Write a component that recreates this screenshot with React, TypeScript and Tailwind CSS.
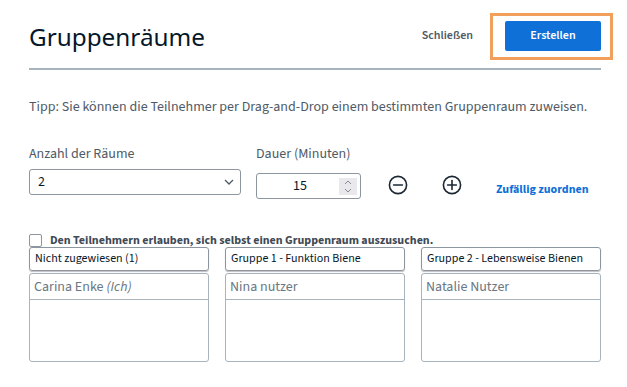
import React from "react";

function CircleIcon({ plus }: { plus?: boolean }) {
  return (
    <svg width="20" height="20" viewBox="0 0 20 20" fill="none" stroke="#1c2733" strokeWidth="1.6">
      <circle cx="10" cy="10" r="8.6" />
      <line x1="5.6" y1="10" x2="14.4" y2="10" strokeLinecap="round" />
      {plus && <line x1="10" y1="5.6" x2="10" y2="14.4" strokeLinecap="round" />}
    </svg>
  );
}

function Column({ title, name, me }: { title: string; name: string; me?: boolean }) {
  return (
    <div className="flex flex-col">
      <div className="h-[24px] flex items-center px-[5px] border border-[#8b96a1] rounded-[3px] shadow-[0_1px_1px_rgba(0,0,0,0.25)] text-[12px] text-[#06172a] leading-none">
        {title}
      </div>
      <div className="mt-[2px] h-[89px] border border-[#a7b3bd] rounded-[3px]">
        <div className="h-[26px] flex items-center px-[4px] border-b border-[#a7b3bd] text-[14px] text-[#6b7783] leading-none">
          {name}
          {me && <i className="ml-[3px]">(Ich)</i>}
        </div>
      </div>
    </div>
  );
}

export default function App() {
  return (
    <div className="w-[627px] h-[387px] bg-white overflow-hidden font-['Source_Sans_3','Lato','Liberation_Sans',sans-serif]">
      <div className="pl-[29px] pr-[26px] pt-[21px]">
        <div className="flex items-center justify-between h-[30px]">
          <h1 className="text-[24.3px] leading-none text-[#06172a] mt-[2px] font-['Noto_Sans','Source_Sans_3',sans-serif]">
            Gruppenräume
          </h1>
          <div className="flex items-center">
            <span className="text-[12px] font-semibold text-[#4e5a66] mr-[32px]">Schließen</span>
            <div className="relative">
              <div className="absolute left-[-15px] right-[-12px] top-[-8px] bottom-[-9px] border-[3px] border-[#f0a05a]" />
              <button className="relative w-[96px] h-[30px] rounded-[2px] bg-[#0f70d7] text-white text-[12px] font-semibold">
                Erstellen
              </button>
            </div>
          </div>
        </div>

        <div className="mt-[17px] h-[2px] bg-[#a7b3bd]" />

        <p className="mt-[27px] text-[14px] leading-[20px] text-[#4e5a66]">
          Tipp: Sie können die Teilnehmer per Drag-and-Drop einem bestimmten Gruppenraum zuweisen.
        </p>

        <div className="mt-[27px] flex items-start">
          <div className="w-[212px]">
            <div className="text-[14px] leading-[20px] text-[#4e5a66]">Anzahl der Räume</div>
            <div className="mt-[5px] h-[26px] border border-[#8b96a1] rounded-[3px] flex items-center justify-between pl-[8px] pr-[6px] text-[14px] text-[#06172a]">
              <span>2</span>
              <svg width="10" height="6" viewBox="0 0 10 6" fill="none" stroke="#4e5a66" strokeWidth="1.3">
                <path d="M1 1 L5 5 L9 1" />
              </svg>
            </div>
          </div>
          <div className="ml-[15px] w-[105px]">
            <div className="text-[14px] leading-[20px] text-[#4e5a66]">Dauer (Minuten)</div>
            <div className="mt-[9px] h-[26px] border border-[#8b96a1] rounded-[3px] flex items-center pr-[3px] text-[14px] text-[#06172a]">
              <span className="flex-1 text-center pl-[4px]">15</span>
              <div className="w-[18px] h-[17px] bg-[#e9e9ed] flex flex-col items-center justify-center gap-[3px]">
                <svg width="8" height="5" viewBox="0 0 8 5" fill="none" stroke="#8a8a8e" strokeWidth="1">
                  <path d="M1 4 L4 1 L7 4" />
                </svg>
                <svg width="8" height="5" viewBox="0 0 8 5" fill="none" stroke="#8a8a8e" strokeWidth="1">
                  <path d="M1 1 L4 4 L7 1" />
                </svg>
              </div>
            </div>
          </div>
          <div className="ml-[27px] mt-[31px]">
            <CircleIcon />
          </div>
          <div className="ml-[34px] mt-[31px]">
            <CircleIcon plus />
          </div>
          <div className="ml-[34px] mt-[38px] text-[12px] leading-[16px] font-bold text-[#0f70d7]">
            Zufällig zuordnen
          </div>
        </div>

        <div className="mt-[35px] h-[13px] flex items-center">
          <div className="w-[13px] h-[13px] border-[1.5px] border-[#8b96a1] rounded-[2px]" />
          <span className="ml-[8px] text-[12px] font-bold text-[#3f4a55] leading-none">
            Den Teilnehmern erlauben, sich selbst einen Gruppenraum auszusuchen.
          </span>
        </div>

        <div className="grid grid-cols-3 gap-[16px]">
          <Column title="Nicht zugewiesen (1)" name="Carina Enke" me />
          <Column title="Gruppe 1 - Funktion Biene" name="Nina nutzer" />
          <Column title="Gruppe 2 - Lebensweise Bienen" name="Natalie Nutzer" />
        </div>
      </div>
    </div>
  );
}
